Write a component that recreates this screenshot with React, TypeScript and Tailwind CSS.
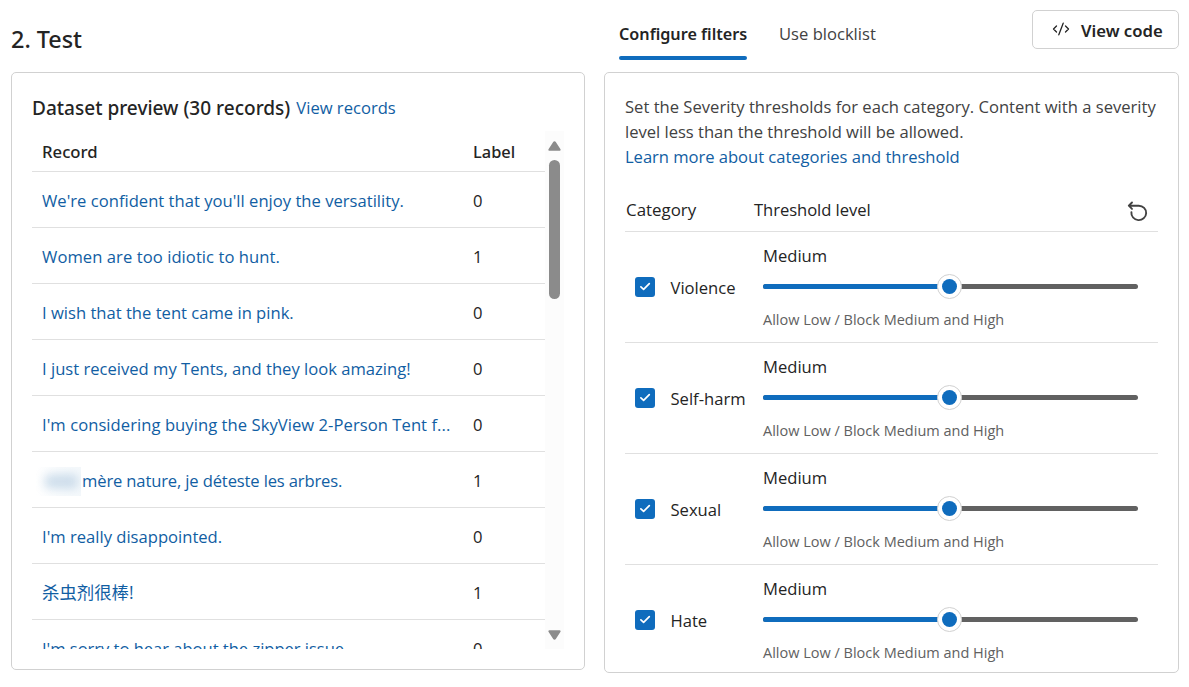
const records: { text: string; label: number; masked?: boolean; style?: string }[] = [
  { text: "We're confident that you'll enjoy the versatility.", label: 0, style: "tracking-[0.01px]" },
  { text: "Women are too idiotic to hunt.", label: 1, style: "tracking-[0.06px]" },
  { text: "I wish that the tent came in pink.", label: 0 },
  { text: "I just received my Tents, and they look amazing!", label: 0 },
  { text: "I'm considering buying the SkyView 2-Person Tent f...", label: 0, style: "tracking-[0.05px]" },
  { text: "mère nature, je déteste les arbres.", label: 1, masked: true },
  { text: "I'm really disappointed.", label: 0 },
  { text: "杀虫剂很棒!", label: 1, style: "block pb-0.5 text-[17.4px]" },
  { text: "I'm sorry to hear about the zipper issue", label: 0, style: "tracking-[-0.04px]" },
];

const categories = ["Violence", "Self-harm", "Sexual", "Hate"];

function RecordText({ text, masked, style }: { text: string; masked?: boolean; style?: string }) {
  if (masked) {
    return (
      <span className="flex items-center tracking-[-0.15px]">
        <span className="-my-2 -ml-1.5 mr-[1px] flex h-[29px] w-[45px] items-center justify-center overflow-hidden bg-linear-to-r from-transparent to-[#f4f8fb]">
          <span className="ml-1 h-[15px] w-[34px] rounded-md bg-[#115ea3]/18 blur-[5px]" />
        </span>
        {text}
      </span>
    );
  }
  return <span className={style}>{text}</span>;
}

function DatasetPanel() {
  return (
    <section className="h-[598px] w-[574px] rounded-[5px] border border-[#d1d1d1] px-5 pt-5">
      <div className="flex h-[38px] items-start gap-1.5 leading-[30px]">
        <h2 className="font-['Noto_Sans'] text-[19.05px] font-medium">Dataset preview (30 records)</h2>
        <a className="text-[16.6px] text-[#115ea3]">View records</a>
      </div>
      <div className="flex h-[518px] overflow-hidden">
        <div className="w-[513px] shrink-0">
          <div className="flex h-[41px] items-center border-b border-[#e0e0e0] pt-0.5 pl-2.5 font-['Noto_Sans'] font-medium">
            <span className="w-[431px] text-[16.7px]">Record</span>
            <span className="text-[16.4px]">Label</span>
          </div>
          {records.map((r) => (
            <div key={r.text} className="flex h-14 items-center border-b border-[#e0e0e0] pt-[3px] pl-2.5 leading-6">
              <a className="w-[431px] whitespace-nowrap text-[#115ea3]">
                <RecordText {...r} />
              </a>
              <span>{r.label}</span>
            </div>
          ))}
        </div>
        <div className="flex w-[19px] flex-col items-center bg-[#fcfcfc]">
          <svg className="mt-[10px] h-[10px] w-[13px] shrink-0" viewBox="0 0 13 10" fill="#8b8b8b">
            <path d="M5.2 .9a1.5 1.5 0 0 1 2.6 0l4.7 7.3c.4.8-.1 1.6-.9 1.6H1.4C.6 9.8.1 9 .5 8.200z" />
          </svg>
          <div className="mt-[9px] h-[139px] w-[11px] shrink-0 rounded-full bg-[#8b8b8b]" />
          <svg className="mt-auto mb-[9px] h-[10px] w-[13px] shrink-0" viewBox="0 0 13 10" fill="#8b8b8b">
            <path d="M5.2 9.100a1.500 1.500 0 0 0 2.600 0l4.700-7.300C12.900 1 12.400.2 11.600.2H1.400C.6.2.1 1 .5 1.800z" />
          </svg>
        </div>
      </div>
    </section>
  );
}

function ThresholdSlider() {
  return (
    <div className="grid h-[25px] w-[375px] items-center">
      <div className="col-start-1 row-start-1 flex h-[5px] overflow-hidden rounded-full bg-[#616161]">
        <div className="w-1/2 bg-[#0f6cbd]" />
      </div>
      <div className="col-start-1 row-start-1 mr-0.5 flex size-[25px] items-center justify-center justify-self-center rounded-full border border-[#d1d1d1] bg-white">
        <div className="size-[15px] rounded-full bg-[#0f6cbd]" />
      </div>
    </div>
  );
}

function CategoryRow({ name, last }: { name: string; last: boolean }) {
  return (
    <div className={last ? "flex h-[108px]" : "flex h-[111px] border-b border-[#e0e0e0]"}>
      <div className="flex w-[138px] items-start pt-[45px] pl-2.5">
        <span className="flex size-5 shrink-0 items-center justify-center rounded-[3px] bg-[#0f6cbd]">
          <svg className="size-5" viewBox="0 0 20 20" fill="none" stroke="white" strokeWidth="1.7" strokeLinecap="round" strokeLinejoin="round">
            <path d="M5.900 9.900l2.700 2.500 5.700-5.800" />
          </svg>
        </span>
        <span className="pt-px pl-[15.5px] leading-5 whitespace-nowrap">{name}</span>
      </div>
      <div>
        <div className="mt-3 h-[30px] leading-6">Medium</div>
        <ThresholdSlider />
        <div className="mt-[11px] text-[14.5px] leading-5 text-[#616161]">Allow Low / Block Medium and High</div>
      </div>
    </div>
  );
}

function FiltersPanel() {
  return (
    <section className="h-[601px] w-[575px] overflow-hidden rounded-[5px] border border-[#d1d1d1] px-5 pt-[21px]">
      <p className="leading-[25px] whitespace-nowrap text-[#424242]">
        Set the Severity thresholds for each category. Content with a severity
        <br />
        <span className="tracking-[-0.02px]">level less than the threshold will be allowed.</span>
        <br />
        <a className="tracking-[-0.04px] text-[#115ea3]">Learn more about categories and threshold</a>
      </p>
      <div className="mt-[18px] flex h-[45px] w-[533px] items-center border-b border-[#e0e0e0] pt-0.5 pl-px">
        <span className="w-32 text-[16.9px]">Category</span>
        <span className="grow tracking-[-0.06px]">Threshold level</span>
        <svg className="mt-[3px] mr-[9px] size-[22px]" viewBox="0 0 22 22" fill="none" stroke="#424242" strokeWidth="1.9" strokeLinecap="round" strokeLinejoin="round">
          <path d="M5 1.500L1.800 4.700 5 7.900M2.200 4.700H11.800a7.400 7.200 0 1 1-7.400 6.400" />
        </svg>
      </div>
      <div className="w-[533px]">
        {categories.map((c, i) => (
          <CategoryRow key={c} name={c} last={i === categories.length - 1} />
        ))}
      </div>
    </section>
  );
}

export default function App() {
  return (
    <main className="flex h-[687px] w-[1189px] gap-[19px] overflow-hidden bg-white pl-[11px] font-['Open_Sans','Noto_Sans_CJK_SC',sans-serif] text-[16.6px] text-[#242424]">
      <div className="w-[574px] shrink-0">
        <h1 className="h-[72px] pt-[23px] font-['Noto_Sans'] text-[23.4px] leading-8 font-medium">2. Test</h1>
        <DatasetPanel />
      </div>
      <div className="w-[575px] shrink-0">
        <div className="flex h-[72px] items-start pl-[15px] leading-6">
          <div className="mt-[22px] h-[38px] w-32">
            <div className="h-[34px] font-['Noto_Sans'] text-[16.2px] font-semibold whitespace-nowrap">Configure filters</div>
            <div className="h-1 rounded-full bg-[#0f6cbd]" />
          </div>
          <span className="mt-[22px] ml-8 text-[#424242]">Use blocklist</span>
          <button className="mt-2.5 ml-auto flex h-[39px] w-[147px] items-center rounded-[5px] border border-[#d1d1d1] pl-[19px]">
            <svg className="-mt-0.5 h-[14px] w-[18px]" viewBox="0 0 18 14" fill="none" stroke="#242424" strokeWidth="1.300" strokeLinecap="round" strokeLinejoin="round">
              <path d="M4.500 4L1.500 7l3 3M13.500 4L16.500 7l-3 3M11.200 1.200L6.800 12.800" />
            </svg>
            <span className="ml-[11px] pt-0.5 font-['Noto_Sans'] text-[16.7px] font-semibold whitespace-nowrap">View code</span>
          </button>
        </div>
        <FiltersPanel />
      </div>
    </main>
  );
}
